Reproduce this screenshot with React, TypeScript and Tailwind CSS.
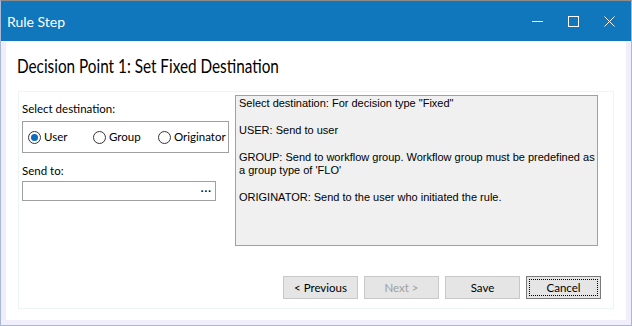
import { useState } from "react";

const options = ["User", "Group", "Originator"]

const Radio = ({ label, checked, onClick }: { label: string; checked: boolean; onClick: () => void }) => (
  <label className="flex items-center gap-[3px] cursor-default" onClick={onClick}>
    <span className="w-[13px] h-[13px] rounded-full border border-[#333333] bg-white flex items-center justify-center">
      {checked && <span className="w-[7px] h-[7px] rounded-full bg-[#0f6cbd]" />}
    </span>
    <span>{label}</span>
  </label>
)

const Button = ({ children, disabled, focused }: { children: string; disabled?: boolean; focused?: boolean }) => (
  <button
    className={
      focused
        ? "w-[75px] h-[23px] bg-[#e5e5e5] border border-[#7a7a7a] p-[2px]"
        : "w-[75px] h-[23px] bg-[#e5e5e5] border border-[#c8c8c8] p-[2px]"
    }
  >
    <span
      className={
        focused
          ? "flex h-full w-full items-center justify-center border border-dotted border-black text-black"
          : disabled
            ? "flex h-full w-full items-center justify-center text-[#a0a0a0]"
            : "flex h-full w-full items-center justify-center text-black"
      }
    >
      {children}
    </span>
  </button>
)

const App = () => {
  const [dest, setDest] = useState("User")

  return (
    <div className="w-[632px] h-[326px] flex flex-col border border-[#a8b8d8] border-t-[#8c8c8c] bg-[#f1eefb] font-['Lato',sans-serif] text-[11.5px] text-black overflow-hidden">
      {/* title bar */}
      <div className="h-[40px] bg-[#1077bd] flex items-center justify-between shrink-0">
        <span className="pl-[6px] text-white text-[14px]">Rule Step</span>
        <div className="flex items-center h-full">
          <div className="w-[36px] h-full flex items-center justify-center">
            <svg width="11" height="11" viewBox="0 0 11 11"><path d="M0 5.5H11" stroke="white" strokeWidth="1" /></svg>
          </div>
          <div className="w-[36px] h-full flex items-center justify-center">
            <svg width="11" height="11" viewBox="0 0 11 11"><rect x="0.5" y="0.5" width="10" height="10" fill="none" stroke="white" strokeWidth="1" /></svg>
          </div>
          <div className="w-[36px] h-full flex items-center justify-center mr-[4px]">
            <svg width="11" height="11" viewBox="0 0 11 11"><path d="M0.5 0.5L10.5 10.5M10.5 0.5L0.5 10.5" stroke="white" strokeWidth="1" /></svg>
          </div>
        </div>
      </div>

      {/* body */}
      <div className="flex-1 mx-[5px] mb-[5px] bg-white flex flex-col">
        <div className="pl-[11px] pt-[13px] h-[50px]">
          <h1 className="inline-block origin-left scale-x-[0.785] text-[19.5px] leading-[24px] whitespace-nowrap">Decision Point 1: Set Fixed Destination</h1>
        </div>

        <div className="ml-[12px] mr-[12px] h-[218px] border border-[#eef5f4] pt-[3px] pl-[3px] flex flex-col">
          <div className="flex gap-[6px]">
            <div className="w-[207px] flex flex-col">
              <div className="pt-[7px] h-[26px] leading-[14px]">Select destination:</div>
              <div className="h-[32px] border border-[#a0a0a0] flex items-center pl-[5px]">
                <div className="flex items-center">
                  {options.map((o, i) => (
                    <div key={o} className={i === 0 ? "w-[65px]" : i === 1 ? "w-[65px]" : ""}>
                      <Radio label={o} checked={dest === o} onClick={() => setDest(o)} />
                    </div>
                  ))}
                </div>
              </div>
              <div className="pt-[11px] h-[28px] leading-[14px]">Send to:</div>
              <div className="w-[194px] h-[20px] border border-[#a0a0a0] flex items-center justify-end pr-[3px]">
                <span className="font-bold tracking-[1px] leading-none -mt-[6px]">...</span>
              </div>
            </div>

            <div className="w-[363px] h-[151px] bg-[#f0f0f0] border border-[#a0a0a8] px-[3px] pt-[1px] font-['Liberation_Sans',sans-serif] text-[11px] leading-[13.4px] whitespace-nowrap">
              <p>Select destination: For decision type "Fixed"</p>
              <p className="mt-[13.4px]">USER: Send to user</p>
              <p className="mt-[13.4px]">GROUP: Send to workflow group. Workflow group must be predefined as<br />a group type of 'FLO'</p>
              <p className="mt-[13.4px]">ORIGINATOR: Send to the user who initiated the rule.</p>
            </div>
          </div>

          <div className="flex justify-end gap-[6px] mt-[30px] pr-[12px]">
            <Button>&lt; Previous</Button>
            <Button disabled>Next &gt;</Button>
            <Button>Save</Button>
            <Button focused>Cancel</Button>
          </div>
        </div>
      </div>
    </div>
  )
}

export default App
